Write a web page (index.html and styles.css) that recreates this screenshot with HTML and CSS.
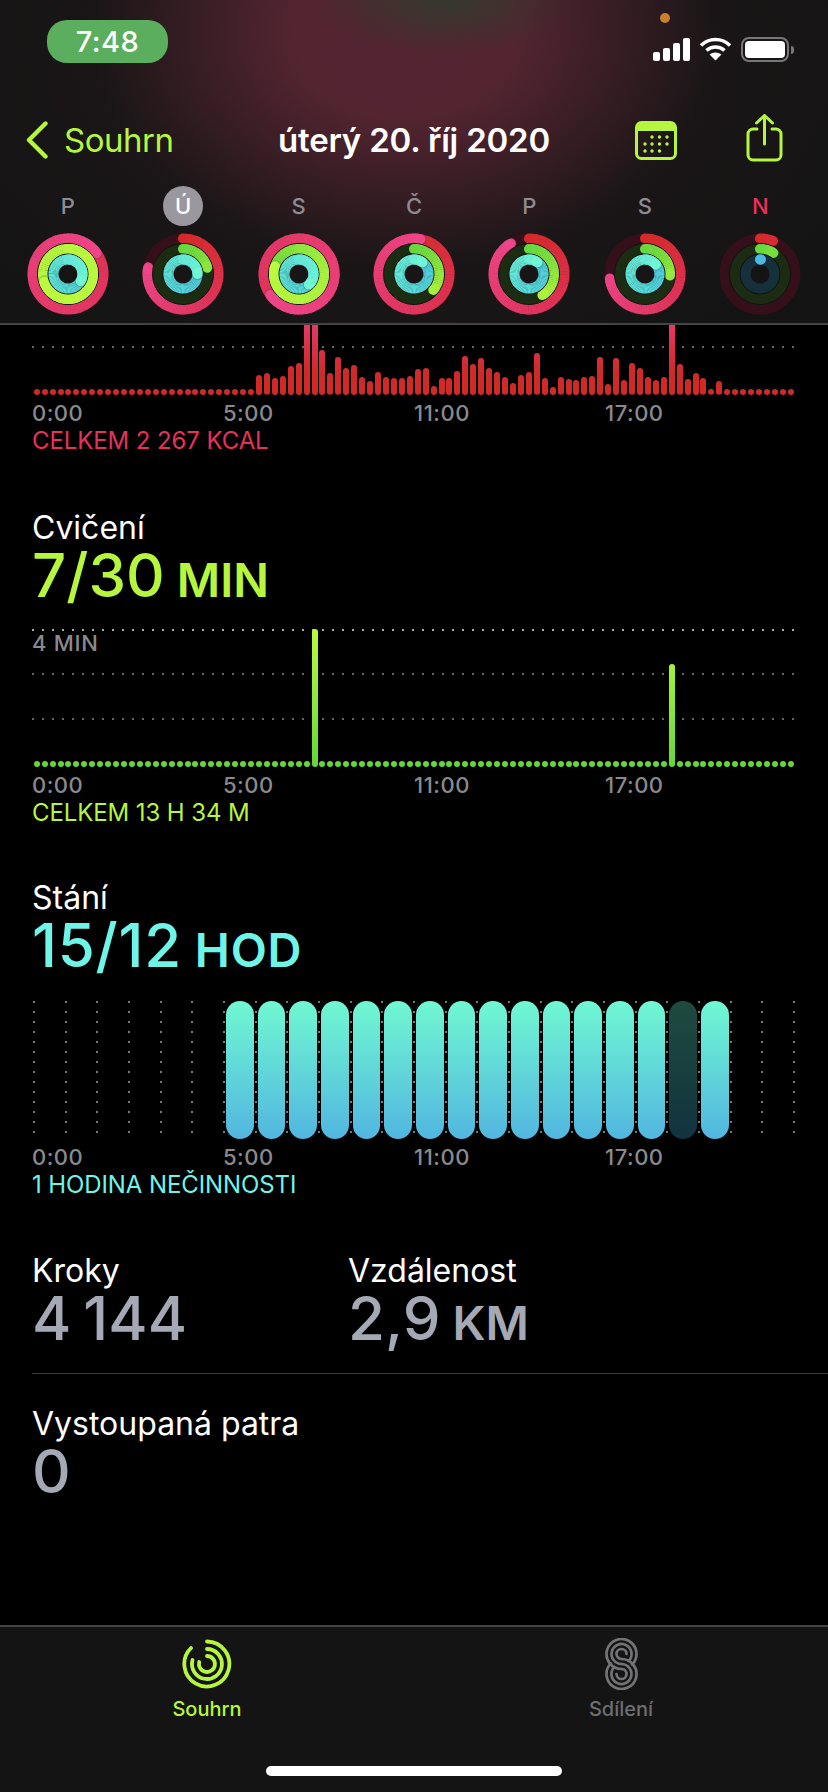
FILE: index.html
```html
<!DOCTYPE html>
<html lang="cs">
<head>
<meta charset="utf-8">
<title>Aktivita</title>
<link rel="stylesheet" href="styles.css">
</head>
<body>
<div class="app">
  <header class="header">
    <span class="orange-dot"></span>
    <div class="status">
      <span class="pill">7:48</span>
      <div class="status-icons">
        <span class="signal"><i class="s1"></i><i class="s2"></i><i class="s3"></i><i class="s4"></i></span>
        <svg class="wifi" width="33" height="25" viewBox="0 0 33 25"><g fill="none" stroke="#fff" stroke-width="3.6"><path d="M2 9.500C10 1.500 23 1.500 31 9.500"/><path d="M7.500 14.500C12.500 9.800 20.500 9.800 25.500 14.500"/></g><path d="M16.500 24.500L10.600 18.600C13.800 15.800 19.200 15.800 22.400 18.600Z" fill="#fff"/></svg>
        <span class="battery"><span class="battery-fill"></span></span>
        <span class="battery-nub"></span>
      </div>
    </div>
    <nav class="nav">
      <a class="back">
        <svg class="chevron" width="24" height="38" viewBox="0 0 24 38"><path d="M20.500 2.500L4 19L20.500 35.500" fill="none" stroke="#b6f63e" stroke-width="4.400" stroke-linecap="round" stroke-linejoin="round"/></svg>
        <span>Souhrn</span>
      </a>
      <h1 class="title">úterý 20. říj 2020</h1>
      <div class="nav-actions">
        <svg width="42" height="39" viewBox="0 0 42 39"><rect x="1.500" y="1.500" width="39" height="36" rx="5" fill="none" stroke="#b6f63e" stroke-width="3"/><path d="M1.500 9.500V6.500A5 5 0 0 1 6.500 1.500H35.500A5 5 0 0 1 40.500 6.500V9.500Z" fill="#b6f63e" stroke="#b6f63e"/><g fill="#b6f63e"><circle cx="17" cy="16" r="1.700"/><circle cx="24.500" cy="16" r="1.700"/><circle cx="32" cy="16" r="1.700"/><circle cx="10" cy="23" r="1.700"/><circle cx="17" cy="23" r="1.700"/><circle cx="24.500" cy="23" r="1.700"/><circle cx="32" cy="23" r="1.700"/><circle cx="10" cy="30" r="1.700"/><circle cx="17" cy="30" r="1.700"/><circle cx="24.500" cy="30" r="1.700"/></g></svg>
        <svg class="share" width="37" height="48" viewBox="0 0 37 48"><path d="M11 15H7A5 5 0 0 0 2 20V41A5 5 0 0 0 7 46H30A5 5 0 0 0 35 41V20A5 5 0 0 0 30 15H26" fill="none" stroke="#b6f63e" stroke-width="3" stroke-linecap="round"/><path d="M18.500 30V2M10.500 9L18.500 1.500L26.500 9" fill="none" stroke="#b6f63e" stroke-width="3" stroke-linecap="round" stroke-linejoin="round"/></svg>
      </div>
    </nav>
    <div class="week" id="week"></div>
  </header>

  <main class="content">
    <section class="chart-block move">
      <div class="plot plot-move">
        <div class="hline hline-move"></div>
        <div class="bars" id="move-bars"></div>
      </div>
      <div class="axis"><span>0:00</span><span>5:00</span><span>11:00</span><span>17:00</span></div>
      <p class="total total-move">CELKEM 2 267 KCAL</p>
    </section>

    <section class="chart-block exercise">
      <h2 class="metric-name">Cvičení</h2>
      <p class="metric-value lime">7/30 <small>MIN</small></p>
      <div class="plot plot-exercise">
        <div class="hline hline-a"></div>
        <div class="hline hline-b"></div>
        <div class="hline hline-c"></div>
        <span class="plot-note">4 MIN</span>
        <div class="bars" id="exercise-bars"></div>
      </div>
      <div class="axis"><span>0:00</span><span>5:00</span><span>11:00</span><span>17:00</span></div>
      <p class="total total-exercise">CELKEM 13 H 34 M</p>
    </section>

    <section class="chart-block stand">
      <h2 class="metric-name">Stání</h2>
      <p class="metric-value cyan">15/12 <small>HOD</small></p>
      <div class="plot plot-stand" id="stand-plot"></div>
      <div class="axis"><span>0:00</span><span>5:00</span><span>11:00</span><span>17:00</span></div>
      <p class="total total-stand">1 HODINA NEČINNOSTI</p>
    </section>

    <section class="stats">
      <div class="stats-row">
        <div class="stat stat-steps">
          <h2 class="metric-name">Kroky</h2>
          <p class="metric-value grey">4 144</p>
        </div>
        <div class="stat">
          <h2 class="metric-name">Vzdálenost</h2>
          <p class="metric-value grey">2,9 <small>KM</small></p>
        </div>
      </div>
      <div class="stat stat-floors">
        <h2 class="metric-name">Vystoupaná patra</h2>
        <p class="metric-value grey">0</p>
      </div>
    </section>
  </main>

  <footer class="tabbar">
    <div class="tab tab-active">
      <svg width="50" height="50" viewBox="0 0 50 50" fill="none" stroke="#b6f63e" stroke-linecap="round" stroke-width="3.800"><path d="M25 2.500A22.500 22.500 0 1 1 9 9"/><path d="M25 10A15 15 0 1 1 10.500 21"/><path d="M25 17A8 8 0 1 1 17.200 23"/></svg>
      <span>Souhrn</span>
    </div>
    <div class="tab">
      <svg width="33" height="52" viewBox="0 0 33 52" fill="none" stroke="#737375" stroke-width="2.700" stroke-linecap="round"><path d="M16.500 31A15 15 0 1 1 27.100 26.600"/><path d="M16.500 26A10 10 0 1 1 23.600 23.100"/><path d="M16.500 21A5 5 0 1 1 21.500 16"/><path d="M16.500 21A15 15 0 1 1 5.900 25.400"/><path d="M16.500 26A10 10 0 1 1 9.400 28.900"/><path d="M16.500 31A5 5 0 1 1 11.500 36"/></svg>
      <span>Sdílení</span>
    </div>
    <span class="home-indicator"></span>
  </footer>
</div>
<script src="app.js"></script>
</body>
</html>
```

FILE: styles.css
```css
* { box-sizing: border-box; }
html, body { margin: 0; padding: 0; background: #000; }
body { font-family: Inter, "Liberation Sans", sans-serif; color: #fff; }
h1, h2, p { margin: 0; font-weight: 400; }
small { font-size: inherit; }

.app { width: 828px; height: 1792px; display: flex; flex-direction: column; overflow: hidden; background: #000; }

/* header */
.header { position: relative; height: 325px; flex: none; border-bottom: 2px solid #444;
  background:
    radial-gradient(ellipse 130px 55px at 445px 0, rgba(45,62,45,.8), rgba(45,62,45,0)),
    radial-gradient(ellipse 310px 235px at 405px 30px, rgba(112,44,62,.64) 36%, rgba(112,44,62,0) 100%),
    radial-gradient(ellipse 520px 340px at 395px 60px, rgba(112,44,62,.16), rgba(112,44,62,0)),
    #141414; }
.orange-dot { position: absolute; left: 660px; top: 13px; width: 10px; height: 10px; border-radius: 50%; background: #c8802f; }
.status { height: 114px; padding: 20px 34px 0 47px; display: flex; justify-content: space-between; align-items: flex-start; }
.pill { width: 121px; height: 43px; border-radius: 20px; background: #5bae5d; text-align: center; font-size: 29px; font-weight: 500; line-height: 43px; letter-spacing: .5px; }
.status-icons { display: flex; align-items: flex-end; padding-top: 17px; height: 42px; }
.signal { display: flex; align-items: flex-end; gap: 3px; width: 37px; height: 23px; margin-bottom: 1px; }
.signal i { display: block; width: 7px; background: #fff; border-radius: 2px; }
.signal .s1 { height: 9px; }
.signal .s2 { height: 13px; }
.signal .s3 { height: 18px; }
.signal .s4 { height: 23px; }
.wifi { margin: 0 9px 1px 9px; }
.battery { width: 48px; height: 25px; padding: 2px; border: 2px solid #777; border-radius: 8px; }
.battery-fill { display: block; height: 100%; background: #fff; border-radius: 4px; }
.battery-nub { width: 3px; height: 8px; margin: 0 0 8px 2px; background: #777; border-radius: 0 3px 3px 0; }
.nav { height: 52px; display: flex; align-items: center; padding: 0 45px 0 25px; }
.back { display: flex; align-items: center; gap: 15px; width: 253px; color: #b6f63e; font-size: 33px; letter-spacing: -.5px; }
.title { flex: none; width: 320px; font-size: 33px; font-weight: 600; letter-spacing: -.2px; white-space: nowrap; }
.nav-actions { flex: 1; display: flex; align-items: center; justify-content: space-between; padding-left: 37px; }
.share { margin-top: -4px; }
.week { margin-top: 20px; padding: 0 10px; display: grid; grid-template-columns: repeat(7, 1fr); }
.day { display: flex; flex-direction: column; align-items: center; gap: 7px; }
.day-label { width: 40px; height: 40px; border-radius: 50%; display: flex; align-items: center; justify-content: center; font-size: 22px; font-weight: 500; color: #8f8b92; }
.day-today { background: #9b979e; color: #fff; }
.day-sun { color: #e8315a; }
.ring { display: block; }

/* body */
.content { flex: 1; display: flex; flex-direction: column; padding-left: 32px; }
.chart-block { display: flex; flex-direction: column; }
.plot { position: relative; width: 763px; overflow: hidden; }
.plot-move { height: 70px; }
.plot-exercise { height: 142px; margin-top: 20px; }
.plot-stand { height: 138px; margin-top: 26px; }
.hline { position: absolute; left: 0; right: 0; height: 2px;
  background-image: radial-gradient(circle, #666 0 1px, transparent 1.200px);
  background-size: 10px 2px; background-position: -4px 0; }
.hline-move { top: 21px; }
.hline-a { top: 4px; background-image: radial-gradient(circle, #aaa 0 1px, transparent 1.200px); }
.hline-b { top: 48px; }
.hline-c { top: 93px; }
.plot-note { position: absolute; left: 0; top: 5px; font-size: 22px; font-weight: 500; letter-spacing: .7px; color: #8a8a8e; }
.bars { position: absolute; left: 1.700px; right: 0; bottom: 0; height: 100%; display: flex; align-items: flex-end; gap: 1.940px; }
.bar { flex: none; width: 6px; border-radius: 3px; background-repeat: no-repeat; background-position: bottom; }
#move-bars .bar { background-image: linear-gradient(#e8396a, #d83040 40%, #cf2a27 70%); background-size: 100% 72px; }
#exercise-bars .bar { background-image: linear-gradient(#bcf93f, #62d63c); background-size: 100% 138px; }
.vline { position: absolute; top: 0; width: 2px; height: 132px;
  background-image: radial-gradient(circle, #777 0 1px, transparent 1.300px);
  background-size: 2px 10px; background-position: 0 -4px; }
.stand-bar { position: absolute; top: 0; bottom: 0; width: 27.700px; border-radius: 14px; background: linear-gradient(#70f8d2, #52b6e0); }
.stand-bar-dim { background: linear-gradient(#1e4a3e, #12333f); }

.axis { height: 26px; margin-top: 5px; font-size: 22px; line-height: 26px; font-weight: 500; letter-spacing: .5px; color: #8a8a8e; display: grid; grid-template-columns: repeat(4, 191px); }
.total { margin-top: 1px; font-size: 24px; line-height: 27px; letter-spacing: -.1px; }
.total-move { color: #e8315a; }
.total-exercise { color: #b6f63e; }
.total-stand { color: #6ef5e8; }

.metric-name { font-size: 32px; line-height: 34px; font-weight: 400; }
.metric-value { font-size: 60px; line-height: 60px; font-weight: 500; word-spacing: -4px; }
.metric-value small { font-size: 47px; line-height: 0; font-weight: 600; }
.lime { color: #b6f63e; }
.cyan { color: #6ef5e8; letter-spacing: .8px; }
.grey { color: #a5a9b5; }
.exercise { margin-top: 57px; }
.stand { margin-top: 55px; }
.stats { margin-top: 56px; display: flex; flex-direction: column; }
.stats-row { display: flex; padding-bottom: 25px; border-bottom: 1px solid #3a3a3c; }
.stat-steps { width: 316px; }
.stat-floors { padding-top: 33px; }

/* tab bar */
.tabbar { position: relative; height: 167px; flex: none; background: #141414; border-top: 2px solid #444; display: grid; grid-template-columns: 1fr 1fr; padding-top: 11px; }
.tab { display: flex; flex-direction: column; align-items: center; gap: 7px; font-size: 20px; color: #6e6e70; font-weight: 500; }
.tab svg { height: 52px; }
.tab-active { color: #b6f63e; }
.home-indicator { position: absolute; left: 266px; bottom: 16px; width: 296px; height: 10px; border-radius: 5px; background: #fff; }
```

FILE: app.js
```js
(function () {
  var DAYS = [
    { l: 'P', r: [1.15, 1.70, 1.33], s: [0.45, 0.8, 0.5] },
    { l: 'Ú', r: [0.78, 0.21, 1.25], s: [0, 0, 0.3], cls: 'day-today' },
    { l: 'S', r: [1.65, 1.80, 1.38], s: [0.5, 0.1, 0.5] },
    { l: 'Č', r: [1.03, 0.36, 1.10], s: [0.1, 0, 0.3] },
    { l: 'P', r: [0.915, 0.41, 1.10], s: [0, 0, 0.3] },
    { l: 'S', r: [0.73, 0.26, 1.14], s: [0, 0, 0.3] },
    { l: 'N', r: [0.06, 0.09, 0.01], s: [0, 0, 0], cls: 'day-sun' }
  ];
  var RINGS = [
    { r: 35.5, track: '#35101a', stops: [[214, 42, 42], [224, 52, 92], [237, 69, 136]] },
    { r: 25, track: '#1c2c12', stops: [[104, 216, 63], [170, 240, 62], [188, 250, 63]] },
    { r: 14.5, track: '#15303a', stops: [[79, 184, 224], [84, 214, 218], [112, 245, 213]] }
  ];
  var NS = 'http://www.w3.org/2000/svg';

  function mix(stops, t) {
    var p = Math.min(Math.max(t, 0), 1) * (stops.length - 1);
    var i = Math.min(Math.floor(p), stops.length - 2);
    var f = p - i;
    return 'rgb(' + [0, 1, 2].map(function (k) {
      return Math.round(stops[i][k] + (stops[i + 1][k] - stops[i][k]) * f);
    }).join(',') + ')';
  }
  function pt(r, a) {
    return (41 + r * Math.sin(a)).toFixed(2) + ' ' + (41 - r * Math.cos(a)).toFixed(2);
  }
  function el(name, attrs, parent) {
    var n = document.createElementNS(NS, name);
    for (var k in attrs) n.setAttribute(k, attrs[k]);
    parent.appendChild(n);
    return n;
  }
  function colourAt(frac, f, t0) {
    if (f <= 1) return Math.min(1, f * 1.3) * frac;
    var revs = frac * f - (f - 1);
    return t0 + (1 - t0) * Math.max(0, revs);
  }
  function ring(day) {
    var svg = document.createElementNS(NS, 'svg');
    svg.setAttribute('width', 82);
    svg.setAttribute('height', 82);
    svg.setAttribute('viewBox', '0 0 82 82');
    svg.setAttribute('class', 'ring');
    RINGS.forEach(function (R, idx) {
      if (idx > 0) el('circle', { cx: 41, cy: 41, r: R.r + 5.5, fill: 'none', stroke: '#111', 'stroke-width': 1 }, svg);
      el('circle', { cx: 41, cy: 41, r: R.r, fill: 'none', stroke: R.track, 'stroke-width': 10 }, svg);
      var f = day.r[idx];
      var total = f * 2 * Math.PI;
      var n = Math.max(2, Math.round(f * 80));
      for (var i = 0; i < n; i++) {
        var a0 = (i / n) * total;
        var a1 = Math.min((i + 1.15) / n, 1) * total;
        if (f > 1 && i === n - 1) {
          var c = pt(R.r, total).split(' ');
          el('circle', { cx: +c[0] + Math.cos(total) * 1.2, cy: +c[1] + Math.sin(total) * 1.2, r: 5, fill: 'rgba(0,0,0,.15)' }, svg);
        }
        el('path', {
          d: 'M' + pt(R.r, a0) + ' A' + R.r + ' ' + R.r + ' 0 0 1 ' + pt(R.r, a1),
          fill: 'none',
          stroke: mix(R.stops, colourAt(i / (n - 1), f, day.s[idx])),
          'stroke-width': 10,
          'stroke-linecap': (i === 0 || i === n - 1) ? 'round' : 'butt'
        }, svg);
      }
    });
    return svg;
  }

  var week = document.getElementById('week');
  DAYS.forEach(function (d) {
    var day = document.createElement('div');
    day.className = 'day';
    var label = document.createElement('span');
    label.className = 'day-label ' + (d.cls || '');
    label.textContent = d.l;
    day.appendChild(label);
    day.appendChild(ring(d));
    week.appendChild(day);
  });

  var ZERO = 6;
  var move = [];
  for (var i = 0; i < 96; i++) move.push(ZERO);
  var tops = [165,160,173,168,138,128,-20,-20,90,160,112,143,135,172,183,156,172,173,173,167,
    148,143,198,175,173,152,108,131,114,144,156,172,188,164,156,100,174,201,172,176,179,171,168,110,192,114,180,130,143,172,181,170,-20,133,177,158,175,208,184];
  tops.forEach(function (t, k) { move[28 + k] = (225 - t) / 3; });

  function fill(id, values) {
    var root = document.getElementById(id);
    values.forEach(function (h) {
      var b = document.createElement('div');
      b.className = 'bar';
      b.style.height = h + 'px';
      root.appendChild(b);
    });
  }
  fill('move-bars', move);
  var ex = [];
  for (var j = 0; j < 96; j++) ex.push(ZERO);
  ex[35] = 138; ex[80] = 103;
  fill('exercise-bars', ex);

  var plot = document.getElementById('stand-plot');
  for (var v = 0; v < 25; v++) {
    var line = document.createElement('div');
    line.className = 'vline';
    line.style.left = (1 + v * 31.67) + 'px';
    plot.appendChild(line);
  }
  for (var s = 0; s < 16; s++) {
    var bar = document.createElement('div');
    bar.className = 'stand-bar' + (s === 14 ? ' stand-bar-dim' : '');
    bar.style.left = (194 + s * 31.67) + 'px';
    plot.appendChild(bar);
  }
})();
```
